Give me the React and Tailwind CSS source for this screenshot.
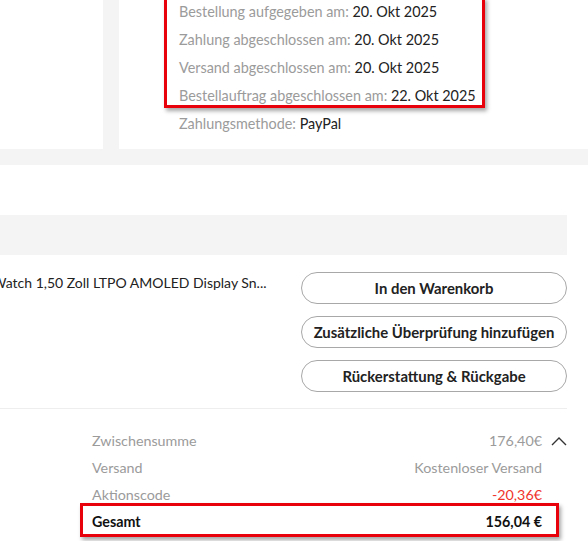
import React from 'react';

const dates = [
  { label: 'Bestellung aufgegeben am:', value: '20. Okt 2025' },
  { label: 'Zahlung abgeschlossen am:', value: '20. Okt 2025' },
  { label: 'Versand abgeschlossen am:', value: '20. Okt 2025' },
  { label: 'Bestellauftrag abgeschlossen am:', value: '22. Okt 2025' },
];

const actions = ['In den Warenkorb', 'Zusätzliche Überprüfung hinzufügen', 'Rückerstattung & Rückgabe'];

const Highlight = ({ className }) => (
  <div
    className={`pointer-events-none absolute border-[3px] border-[#e8000b] shadow-[2px_3px_4px_rgba(0,0,0,0.35)] ${className}`}
  />
);

export default function App() {
  return (
    <div className="w-[588px] h-[541px] overflow-hidden bg-white text-[14px] font-['Lato','Noto_Sans',sans-serif]">
      {/* order info */}
      <div className="flex gap-[16px] bg-[#f4f4f4] pb-[16px]">
        <div className="w-[103px] h-[149px] bg-white" />
        <div className="flex-1 h-[149px] bg-white pl-[60px] text-[14.4px]">
          <div className="relative mt-[-2px] leading-[28px]">
            {dates.map((d) => (
              <p key={d.label} className="whitespace-nowrap">
                <span className="text-[#9b9b9b]">{d.label} </span>
                <span className="text-[#222]">{d.value}</span>
              </p>
            ))}
            <Highlight className="left-[-15px] top-[-1px] w-[321px] h-[111px]" />
          </div>
          <p className="leading-[28px] whitespace-nowrap">
            <span className="text-[#9b9b9b]">Zahlungsmethode: </span>
            <span className="text-[#222]">PayPal</span>
          </p>
        </div>
      </div>

      {/* item */}
      <div className="pt-[50px] pr-[21px]">
        <div className="h-[40px] bg-[#f4f4f4]" />
        <div className="flex justify-between pt-[17px] pb-[16px]">
          <p className="ml-[-8px] mt-[1px] whitespace-nowrap text-[#222] leading-[20px]">
            Watch 1,50 Zoll LTPO AMOLED Display Sn...
          </p>
          <div className="flex w-[266px] flex-col gap-[12px]">
            {actions.map((a) => (
              <button
                key={a}
                className="h-[32px] rounded-full border border-[#a8a8a8] bg-white text-[14.9px] font-bold text-[#222] whitespace-nowrap"
              >
                {a}
              </button>
            ))}
          </div>
        </div>
        <div className="h-px bg-[#eeeeee]" />

        {/* totals */}
        <div className="pl-[92px] pt-[18px] leading-[27px] text-[14.3px]">
          <div className="flex items-center">
            <span className="flex-1 text-[#9b9b9b]">Zwischensumme</span>
            <span className="text-[#9b9b9b]">176,40€</span>
            <svg viewBox="0 0 16 10" className="ml-[9px] w-[16px] h-[10px]" fill="none" stroke="#333" strokeWidth="1.4">
              <path d="M1 9 L8 2 L15 9" />
            </svg>
          </div>
          <div className="flex mr-[25px]">
            <span className="flex-1 text-[#9b9b9b]">Versand</span>
            <span className="text-[#9b9b9b]">Kostenloser Versand</span>
          </div>
          <div className="flex mr-[25px]">
            <span className="flex-1 text-[#9b9b9b]">Aktionscode</span>
            <span className="text-[#f0342c]">-20,36€</span>
          </div>
          <div className="relative flex mr-[25px] font-bold text-[#111]">
            <span className="flex-1">Gesamt</span>
            <span>156,04 €</span>
            <Highlight className="left-[-12px] top-[-5px] w-[479px] h-[34px]" />
          </div>
        </div>
      </div>
    </div>
  );
}
